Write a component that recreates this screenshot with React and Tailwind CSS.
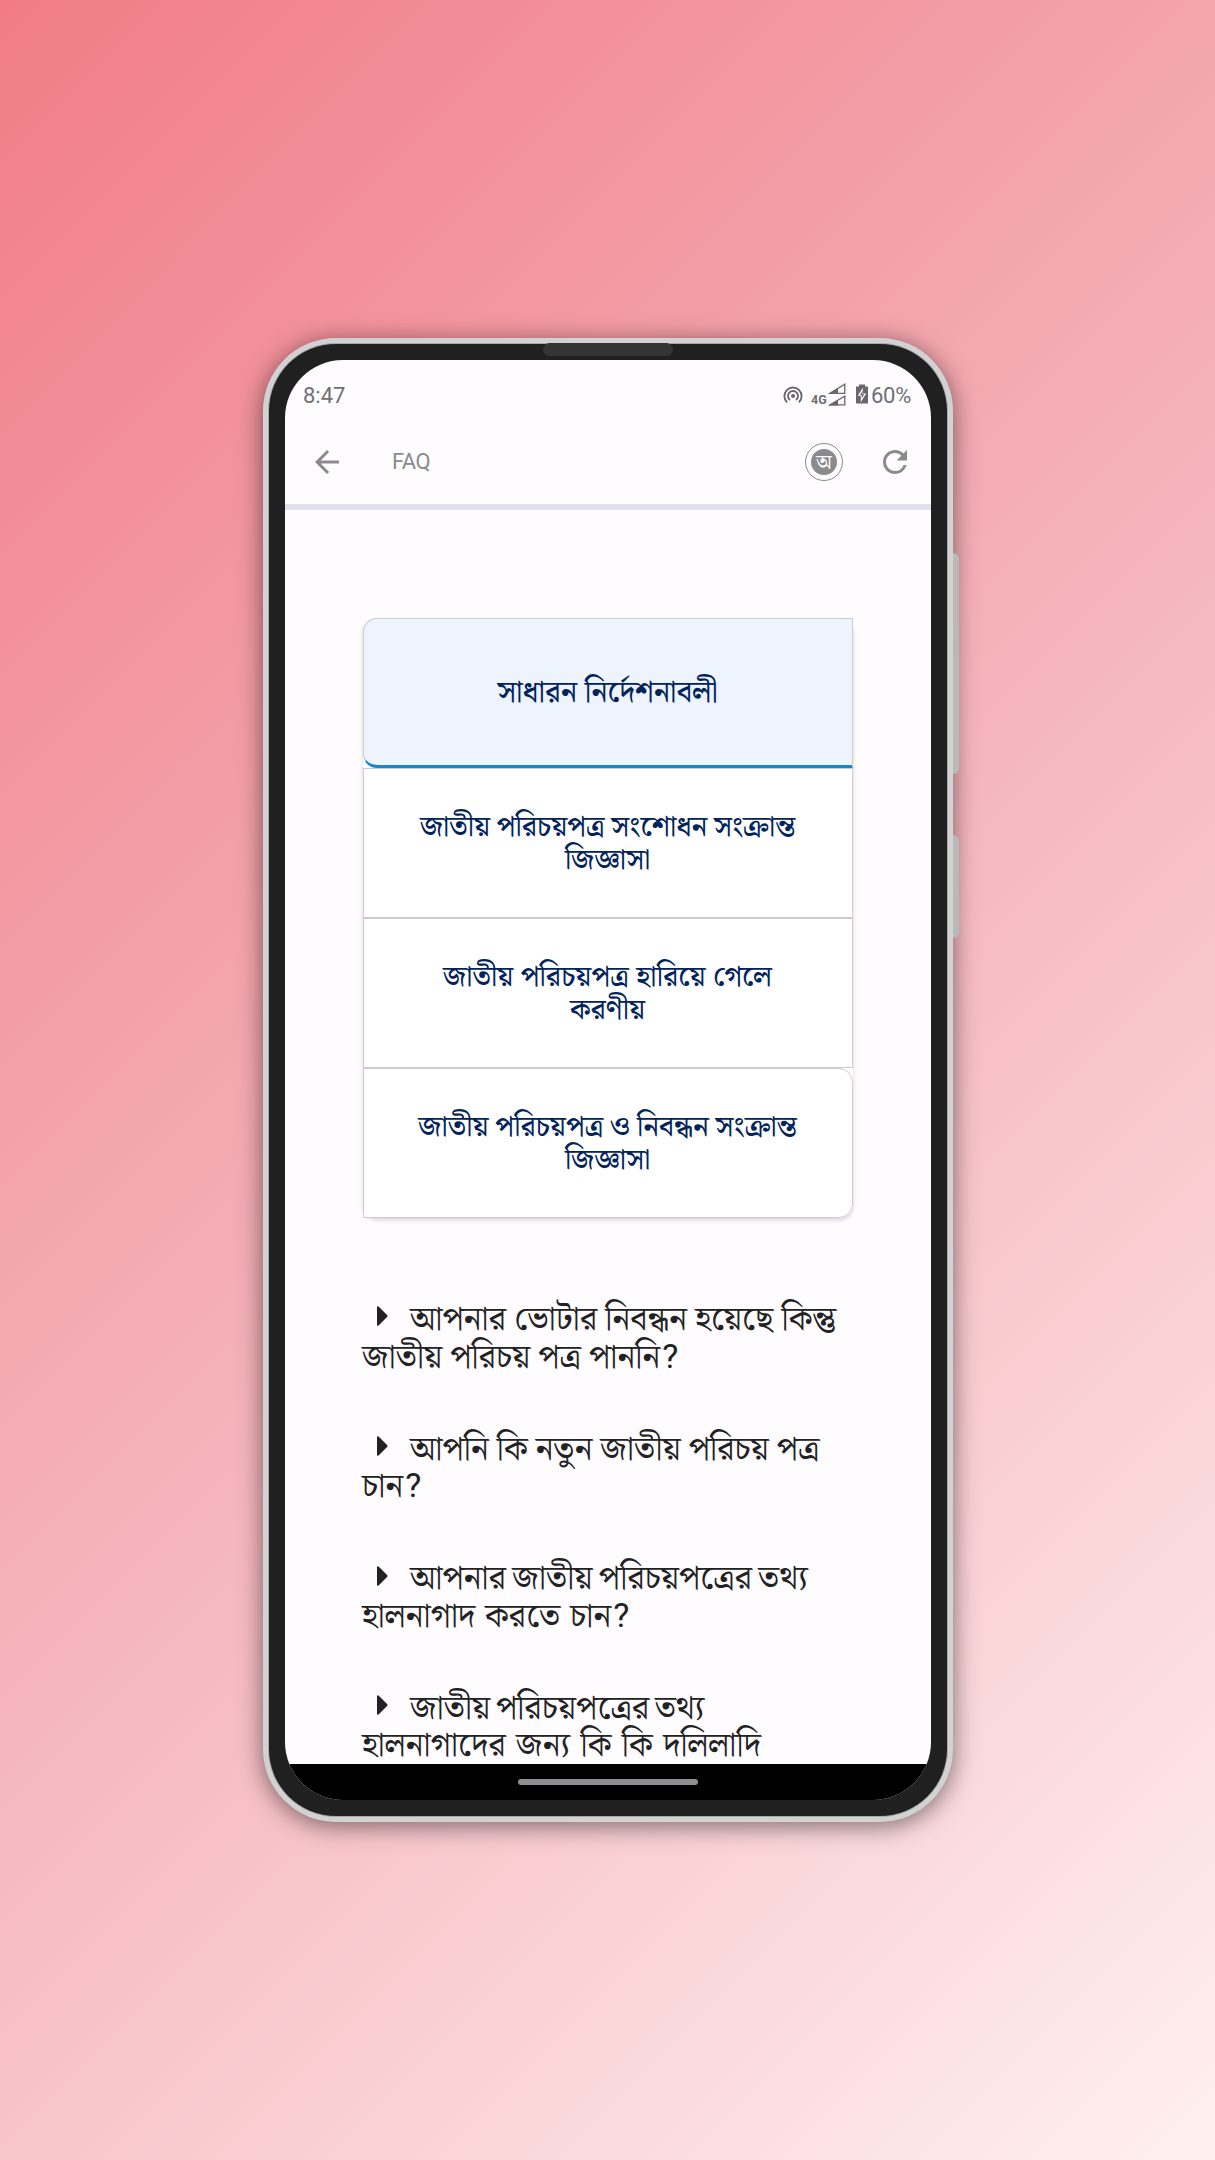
import React from "react";
import { MdArrowBack, MdRefresh } from "react-icons/md";

const tabs = [
  { lines: ["সাধারন নির্দেশনাবলী"], shape: "rounded-l-[14px] bg-[#eef4fe] border-b-[3px] border-b-[#1c84cf] text-[30px]" },
  { lines: ["জাতীয় পরিচয়পত্র সংশোধন সংক্রান্ত", "জিজ্ঞাসা"], shape: "bg-white text-[29px] [word-spacing:-1px]" },
  { lines: ["জাতীয় পরিচয়পত্র হারিয়ে গেলে", "করণীয়"], shape: "bg-white text-[29px]" },
  { lines: ["জাতীয় পরিচয়পত্র ও নিবন্ধন সংক্রান্ত", "জিজ্ঞাসা"], shape: "rounded-r-[14px] bg-white text-[29px] [word-spacing:-0.7px]" },
];

const faqs = [
  { first: "আপনার ভোটার নিবন্ধন হয়েছে কিন্তু", firstSpacing: "[word-spacing:-0.6px]", second: "জাতীয় পরিচয় পত্র পাননি", secondSpacing: "[word-spacing:-0.8px]", question: true },
  { first: "আপনি কি নতুন জাতীয় পরিচয় পত্র", firstSpacing: "[word-spacing:-0.7px]", second: "চান", secondSpacing: "", question: true },
  { first: "আপনার জাতীয় পরিচয়পত্রের তথ্য", firstSpacing: "[word-spacing:-2.5px]", second: "হালনাগাদ করতে চান", secondSpacing: "[word-spacing:1px]", question: true },
  { first: "জাতীয় পরিচয়পত্রের তথ্য", firstSpacing: "[word-spacing:-3px]", second: "হালনাগাদের জন্য কি কি দলিলাদি", secondSpacing: "[word-spacing:1.6px]" },
];

function StatusIcons() {
  return (
    <>
      <svg width="20" height="20" viewBox="0 0 20 20" fill="none" stroke="#68686b" strokeWidth="1.9">
        <circle cx="10" cy="10" r="2" fill="#68686b" stroke="none" />
        <path d="M7 14A5 5 0 1 1 13 14" />
        <path d="M4.1 16.4A8.6 8.6 0 1 1 15.9 16.4" />
      </svg>
      <span className="ml-[8px] mt-[9px] w-[16px] text-[12.5px] leading-3 font-bold">4G</span>
      <svg className="ml-px -mt-[3px]" width="18" height="23" viewBox="0 0 18 23">
        <path d="M2 10.3L16.8 1.2V10.3Z" fill="none" stroke="#68686b" strokeWidth="1.3" />
        <path d="M0 11L10 5V11Z" fill="#68686b" />
        <path d="M2 21.8L16.8 13.2V21.8Z" fill="none" stroke="#68686b" strokeWidth="1.3" />
        <path d="M0 22.5L10 17V22.5Z" fill="#68686b" />
      </svg>
      <svg className="ml-[10px] -mt-[3px]" width="12" height="20" viewBox="0 0 12 20">
        <path d="M3 0.5H9V2.5H12V19.5H0V2.5H3Z" fill="#68686b" />
        <path d="M6.8 3.8L1.8 11.8H4.8V18.2L10.2 9.6H6.8Z" fill="#fefcff" />
        <path d="M6.6 7L4 11H5.8V14.6L8.2 10.3H6.6Z" fill="#68686b" />
      </svg>
    </>
  );
}

export default function App() {
  return (
    <div className="w-[1215px] h-[2160px] overflow-hidden flex justify-center pt-[338px] pl-px bg-linear-135/srgb from-[#f17c87] via-[#f5b4bb] to-[#fff0f0]">
      <div className="relative w-[690px] h-[1484px] rounded-[73px] bg-[#d2d2d2] p-[6px] shadow-[0_4px_24px_rgba(0,0,0,0.5)]">
        <div className="absolute left-[690px] top-[215px] w-[6px] h-[221px] rounded-r-lg bg-[#b9b9b9]" />
        <div className="absolute left-[690px] top-[497px] w-[6px] h-[103px] rounded-r-lg bg-[#b9b9b9]" />
        <div className="relative h-full rounded-[67px] bg-[#202020] p-4 shadow-[0_0_0_1px_#a8a8a8]">
          <div className="absolute left-[274px] top-[-1px] w-[130px] h-[13px] rounded-full bg-[#343434]" />
          <div className="h-full rounded-[58px] overflow-hidden bg-[#fefcff] flex flex-col">
            <div className="h-[71px] shrink-0 flex items-center pl-[18px] pr-[18px] text-[#707073] font-[Roboto,sans-serif]">
              <span className="text-[22px] font-normal grow">8:47</span>
              <StatusIcons />
              <span className="ml-[3px] w-[42px] text-[22px] font-normal tracking-[-0.3px]">60%</span>
            </div>
            <div className="h-[73px] shrink-0 flex items-start pl-6 pr-[18px] pt-[13px] text-[#8b8b8d]">
              <MdArrowBack size={36} className="shrink-0" />
              <span className="grow ml-[47px] text-[22px] leading-9 font-normal tracking-[-0.5px] font-[Roboto,sans-serif]">FAQ</span>
              <div className="size-[38px] -mt-px rounded-full border-[1.5px] border-[#8b8b8d] flex items-center justify-center">
                <div className="size-[26px] rounded-full bg-[#8b8b8d] text-[#fefcff] text-[20px] leading-[28px] flex justify-center font-medium font-['Noto_Serif_Bengali',serif]">অ</div>
              </div>
              <MdRefresh size={36} className="shrink-0 ml-[34px]" />
            </div>
            <div className="h-[6px] shrink-0 bg-[#e0e1ea]" />
            <div className="flex-1 px-[78px] pt-[108px] overflow-hidden font-['Noto_Serif_Bengali','Noto_Sans_Bengali',serif]">
              <div className="rounded-[14px] bg-white shadow-[0_2px_4px_rgba(0,0,0,0.16)]">
                {tabs.map((t, i) => (
                  <div key={i} className={`h-[150px] flex items-center justify-center text-center whitespace-nowrap border border-[#ccc] pt-[2px] pr-px text-[#02245b] leading-[33px] font-medium ${t.shape}`}>
                    <span>{t.lines[0]}{t.lines[1] && <><br />{t.lines[1]}</>}</span>
                  </div>
                ))}
              </div>
              <div className="pt-[84px] -ml-px flex flex-col gap-[54.1px]">
                {faqs.map((f, i) => (
                  <div key={i} className="text-[33.8px] leading-[37.8px] font-normal text-[#222] whitespace-nowrap">
                    <div className="flex items-center h-[37.8px]">
                      <svg className="shrink-0 ml-[15px] mr-[22px] -mt-[9px]" width="11" height="20" viewBox="0 0 11 20"><path d="M0 1.5C0 0 1 0 1.8 .8L10.3 9.2Q11 10 10.3 10.8L1.8 19.2C1 20 0 20 0 18.5Z" fill="#222" /></svg>
                      <span className={f.firstSpacing}>{f.first}</span>
                    </div>
                    <div className={`h-[37.8px] -mt-px mb-px ${f.secondSpacing}`}>
                      {f.second}{f.question && <span className="ml-[2px] font-[Roboto,sans-serif] font-normal text-[34px] leading-none">?</span>}
                    </div>
                  </div>
                ))}
              </div>
            </div>
            <div className="h-9 shrink-0 bg-black flex justify-center pt-[15px]">
              <div className="w-[180px] h-[6px] rounded-full bg-[#8e8e90]" />
            </div>
          </div>
        </div>
      </div>
    </div>
  );
}
